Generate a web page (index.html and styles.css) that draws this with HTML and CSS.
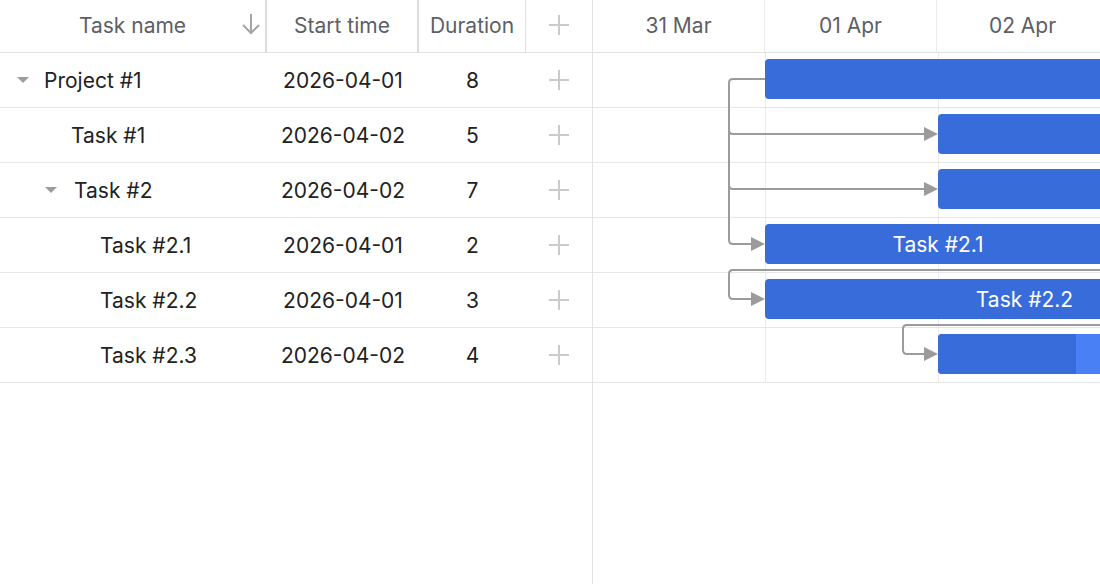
FILE: index.html
```html
<!DOCTYPE html>
<html lang="en">
<head>
<meta charset="UTF-8">
<meta name="viewport" content="width=device-width, initial-scale=1.0">
<title>Gantt</title>
<link rel="stylesheet" href="styles.css">
</head>
<body>
<div class="gantt">
  <div class="grid">
    <div class="grid-head">
      <div class="hcell col-name">Task name
        <svg class="sort" width="20" height="22" viewBox="0 0 20 22"><path d="M10 1V20M2 12L10 20L18 12" fill="none" stroke="#a5a5a5" stroke-width="2"/></svg>
      </div>
      <div class="hcell col-start">Start time</div>
      <div class="hcell col-dur">Duration</div>
      <div class="hcell col-add"><span class="plus"></span></div>
    </div>
    <div class="grid-body">
      <div class="row">
        <div class="cell col-name lvl0"><span class="toggle"></span>Project #1</div>
        <div class="cell col-start">2026-04-01</div>
        <div class="cell col-dur">8</div>
        <div class="cell col-add"><span class="plus"></span></div>
      </div>
      <div class="row">
        <div class="cell col-name lvl1 leaf">Task #1</div>
        <div class="cell col-start">2026-04-02</div>
        <div class="cell col-dur">5</div>
        <div class="cell col-add"><span class="plus"></span></div>
      </div>
      <div class="row">
        <div class="cell col-name lvl1"><span class="toggle"></span>Task #2</div>
        <div class="cell col-start">2026-04-02</div>
        <div class="cell col-dur">7</div>
        <div class="cell col-add"><span class="plus"></span></div>
      </div>
      <div class="row">
        <div class="cell col-name lvl2 leaf">Task #2.1</div>
        <div class="cell col-start">2026-04-01</div>
        <div class="cell col-dur">2</div>
        <div class="cell col-add"><span class="plus"></span></div>
      </div>
      <div class="row">
        <div class="cell col-name lvl2 leaf">Task #2.2</div>
        <div class="cell col-start">2026-04-01</div>
        <div class="cell col-dur">3</div>
        <div class="cell col-add"><span class="plus"></span></div>
      </div>
      <div class="row">
        <div class="cell col-name lvl2 leaf">Task #2.3</div>
        <div class="cell col-start">2026-04-02</div>
        <div class="cell col-dur">4</div>
        <div class="cell col-add"><span class="plus"></span></div>
      </div>
    </div>
  </div>

  <div class="timeline">
    <div class="scale">
      <div class="day">31 Mar</div>
      <div class="day">01 Apr</div>
      <div class="day">02 Apr</div>
    </div>
    <div class="timeline-body">
      <div class="trow"><div class="tcell"></div><div class="tcell"></div><div class="tcell"></div></div>
      <div class="trow"><div class="tcell"></div><div class="tcell"></div><div class="tcell"></div></div>
      <div class="trow"><div class="tcell"></div><div class="tcell"></div><div class="tcell"></div></div>
      <div class="trow"><div class="tcell"></div><div class="tcell"></div><div class="tcell"></div></div>
      <div class="trow"><div class="tcell"></div><div class="tcell"></div><div class="tcell"></div></div>
      <div class="trow"><div class="tcell"></div><div class="tcell"></div><div class="tcell"></div></div>

      <!-- dependency links, coordinates relative to the body -->
      <svg class="links" width="520" height="340" viewBox="0 0 520 340">
        <g fill="none" stroke="#9b9b9b" stroke-width="2">
          <path d="M172 26H140Q136 26 136 30V77Q136 81 140 81H333"/>
          <path d="M136 78V132Q136 136 140 136H333"/>
          <path d="M136 133V187Q136 191 140 191H160"/>
          <path d="M520 217H140Q136 217 136 221V242Q136 246 140 246H160"/>
          <path d="M520 272H314Q310 272 310 276V297Q310 301 314 301H333"/>
        </g>
        <g fill="#9b9b9b">
          <path d="M331 74L345 81L331 88Z"/>
          <path d="M331 129L345 136L331 143Z"/>
          <path d="M158 184L172 191L158 198Z"/>
          <path d="M158 239L172 246L158 253Z"/>
          <path d="M331 294L345 301L331 308Z"/>
        </g>
      </svg>

      <div class="bar" style="left:172px;top:6px;width:1384px"></div>
      <div class="bar" style="left:345px;top:61px;width:865px"></div>
      <div class="bar" style="left:345px;top:116px;width:1211px"></div>
      <div class="bar" style="left:172px;top:171px;width:346px"><span class="bar-text">Task #2.1</span></div>
      <div class="bar" style="left:172px;top:226px;width:519px"><span class="bar-text">Task #2.2</span></div>
      <div class="bar light" style="left:345px;top:281px;width:692px"><div class="progress" style="width:20%"></div></div>
    </div>
  </div>
</div>
</body>
</html>
```

FILE: styles.css
```css
body, html {
  margin: 0;
  padding: 0;
  background: #fff;
  font-family: 'Inter', 'Noto Sans', sans-serif;
  color: #222;
  overflow: hidden;
}

.gantt {
  display: flex;
  height: 584px;
  width: 1100px;
  overflow: hidden;
}

/* left grid */
.grid {
  width: 592px;
  flex: none;
  border-right: 1px solid #e2e2e2;
}

.grid-head {
  display: flex;
  height: 52px;
  border-bottom: 1px solid #e2e2e2;
  color: #5c6066;
  font-size: 21px;
}

.hcell {
  display: flex;
  align-items: center;
  justify-content: center;
  position: relative;
  border-right: 1px solid #e2e2e2;
  box-sizing: border-box;
  padding-bottom: 2px;
}

.grid-head .col-name,
.grid-head .col-start {
  border-right: 2px solid #dcdcdc;
}

.hcell.col-add {
  border-right: none;
}

.col-name { width: 267px; }
.col-start { width: 152px; }
.col-dur { width: 107px; }
.col-add { width: 66px; }

.sort {
  position: absolute;
  right: 4px;
  top: 13px;
}

.row {
  display: flex;
  height: 54px;
  border-bottom: 1px solid #e6e6e6;
  font-size: 21px;
}

.cell {
  display: flex;
  align-items: center;
  justify-content: center;
  box-sizing: border-box;
}

.cell.col-name {
  justify-content: flex-start;
}

.lvl0 { padding-left: 17px; }
.lvl1 { padding-left: 45px; }
.lvl2 { padding-left: 100px; }
.lvl1.leaf { padding-left: 71px; }

.toggle {
  width: 0;
  height: 0;
  border-left: 6.5px solid transparent;
  border-right: 6.5px solid transparent;
  border-top: 6px solid #9c9c9c;
  margin-right: 15px;
}

.lvl1 .toggle { margin-right: 17px; }

.plus {
  width: 20px;
  height: 20px;
  position: relative;
}

.plus::before,
.plus::after {
  content: "";
  position: absolute;
  background: #cacaca;
}

.plus::before {
  left: 9px;
  top: 0;
  width: 2px;
  height: 20px;
}

.plus::after {
  left: 0;
  top: 9px;
  width: 20px;
  height: 2px;
}

/* right timeline */
.timeline {
  flex: 1;
  overflow: hidden;
}

.scale {
  display: flex;
  height: 52px;
  border-bottom: 1px solid #e2e2e2;
  color: #5c6066;
  font-size: 21px;
}

.day {
  width: 172px;
  flex: none;
  border-right: 1px solid #ebebeb;
  display: flex;
  align-items: center;
  justify-content: center;
  padding-bottom: 2px;
  box-sizing: border-box;
}

.timeline-body {
  position: relative;
}

.trow {
  display: flex;
  height: 54px;
  border-bottom: 1px solid #e6e6e6;
}

.tcell {
  width: 172px;
  flex: none;
  border-right: 1px solid #ebebeb;
}

.links {
  position: absolute;
  left: 0;
  top: 0;
  z-index: 1;
}

.bar {
  position: absolute;
  height: 40px;
  background: #396cdb;
  border-radius: 4px;
  overflow: hidden;
  z-index: 2;
  display: flex;
  align-items: center;
  justify-content: center;
}

.bar.light {
  background: #4a80f6;
  justify-content: flex-start;
}

.progress {
  height: 100%;
  background: #396cdb;
}

.bar-text {
  color: #fff;
  font-size: 21px;
}
```
